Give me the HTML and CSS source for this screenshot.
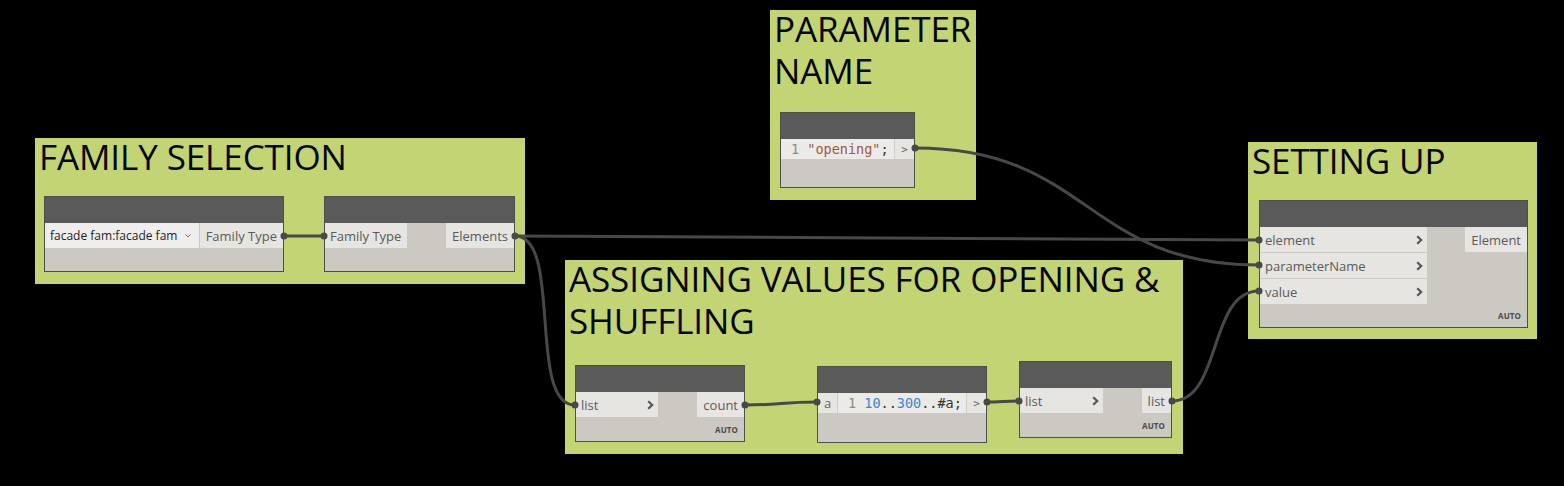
FILE: index.html
```html
<!DOCTYPE html>
<html>
<head>
<meta charset="utf-8">
<link rel="stylesheet" href="styles.css">
</head>
<body>
<div class="canvas">

  <div class="group g-family">
    <h2 class="group-title">FAMILY SELECTION</h2>
    <div class="node n-select">
      <div class="node-head"></div>
      <div class="node-ports">
        <div class="dropdown"><span>facade fam:facade fam</span><svg class="dd-chev" width="6" height="4" viewBox="0 0 6 4"><polyline points="0.5,0.5 3,3 5.5,0.5" fill="none" stroke="#777" stroke-width="1"/></svg></div>
        <div class="port out">Family Type</div>
      </div>
      <div class="node-foot"></div>
    </div>
    <div class="node n-elements">
      <div class="node-head"></div>
      <div class="node-ports">
        <div class="inputs"><div class="port in w82">Family Type</div></div>
        <div class="outputs"><div class="port out">Elements</div></div>
      </div>
      <div class="node-foot"></div>
    </div>
  </div>

  <div class="group g-param">
    <h2 class="group-title">PARAMETER NAME</h2>
    <div class="node n-code1">
      <div class="node-head"></div>
      <div class="code-row">
        <div class="code"><span class="lineno">1</span> <span class="str">"opening"</span>;</div>
        <div class="code-out">&gt;</div>
      </div>
      <div class="node-foot"></div>
    </div>
  </div>

  <div class="group g-setting">
    <h2 class="group-title">SETTING UP</h2>
    <div class="node n-setparam">
      <div class="node-head"></div>
      <div class="node-ports">
        <div class="inputs w167">
          <div class="port in chev">element<svg class="chev-ic" width="7" height="10" viewBox="0 0 7 10"><polyline points="1.2,1.2 5.2,5 1.2,8.8" fill="none" stroke="#555" stroke-width="2.2"/></svg></div>
          <div class="port in chev">parameterName<svg class="chev-ic" width="7" height="10" viewBox="0 0 7 10"><polyline points="1.2,1.2 5.2,5 1.2,8.8" fill="none" stroke="#555" stroke-width="2.2"/></svg></div>
          <div class="port in chev">value<svg class="chev-ic" width="7" height="10" viewBox="0 0 7 10"><polyline points="1.2,1.2 5.2,5 1.2,8.8" fill="none" stroke="#555" stroke-width="2.2"/></svg></div>
        </div>
        <div class="outputs"><div class="port out">Element</div></div>
      </div>
      <div class="node-foot"><span class="auto">AUTO</span></div>
    </div>
  </div>

  <div class="group g-assign">
    <h2 class="group-title">ASSIGNING VALUES FOR OPENING &amp; SHUFFLING</h2>
    <div class="node n-count">
      <div class="node-head"></div>
      <div class="node-ports">
        <div class="inputs"><div class="port in chev w82">list<svg class="chev-ic" width="7" height="10" viewBox="0 0 7 10"><polyline points="1.2,1.2 5.2,5 1.2,8.8" fill="none" stroke="#555" stroke-width="2.2"/></svg></div></div>
        <div class="outputs"><div class="port out">count</div></div>
      </div>
      <div class="node-foot"><span class="auto">AUTO</span></div>
    </div>
    <div class="node n-code2">
      <div class="node-head"></div>
      <div class="code-row">
        <div class="code-in">a</div>
        <div class="code"><span class="lineno">1</span> <span class="num">10</span>..<span class="num">300</span>..#a;</div>
        <div class="code-out">&gt;</div>
      </div>
      <div class="node-foot"></div>
    </div>
    <div class="node n-shuffle">
      <div class="node-head"></div>
      <div class="node-ports">
        <div class="inputs"><div class="port in chev w83">list<svg class="chev-ic" width="7" height="10" viewBox="0 0 7 10"><polyline points="1.2,1.2 5.2,5 1.2,8.8" fill="none" stroke="#555" stroke-width="2.2"/></svg></div></div>
        <div class="outputs"><div class="port out">list</div></div>
      </div>
      <div class="node-foot"><span class="auto">AUTO</span></div>
    </div>
  </div>

  <svg class="wires" width="1564" height="486" viewBox="0 0 1564 486">
    <g fill="none" stroke="#484848" stroke-width="3" stroke-linecap="round">
      <path d="M284,236 L324,236"/>
      <path d="M515,236 C720,236 1060,240 1259,240"/>
      <path d="M515,236 C563,236 527,405 575,405"/>
      <path d="M915,148 C1090,148 1085,265 1259,265"/>
      <path d="M745,405 C780,405 782,402 817,402"/>
      <path d="M987,402 C1000,402 1006,401 1019,401"/>
      <path d="M1172,401 C1222,401 1208,291 1259,291"/>
    </g>
    <g fill="#484848">
      <circle cx="284" cy="236" r="3.5"/><circle cx="324" cy="236" r="3.5"/>
      <circle cx="515" cy="236" r="3.5"/>
      <circle cx="1259" cy="240" r="3.5"/><circle cx="1259" cy="265" r="3.5"/><circle cx="1259" cy="291" r="3.5"/>
      <circle cx="915" cy="148" r="3.5"/>
      <circle cx="575" cy="405" r="3.5"/><circle cx="745" cy="405" r="3.5"/>
      <circle cx="817" cy="402" r="3.5"/><circle cx="987" cy="402" r="3.5"/>
      <circle cx="1019" cy="401" r="3.5"/><circle cx="1172" cy="401" r="3.5"/>
    </g>
  </svg>
</div>
</body>
</html>
```
FILE: styles.css
```css
html, body {
  margin: 0;
  padding: 0;
  background: #000;
}

.canvas {
  position: relative;
  width: 1564px;
  height: 486px;
  background: #000;
  overflow: hidden;
  font-family: "Open Sans", "Noto Sans", sans-serif;
}

.group {
  position: absolute;
  box-sizing: border-box;
  background: #c2d473;
  padding: 0 4px;
}

.group-title {
  margin: -2px 0 0 0;
  font-family: "Open Sans", "Noto Sans", sans-serif;
  font-weight: 400;
  font-size: 35px;
  line-height: 42px;
  letter-spacing: -0.1px;
  color: #050505;
}

.g-family  { left: 35px;   top: 138px; width: 490px; height: 146px; }
.g-param   { left: 770px;  top: 10px;  width: 206px; height: 190px; }
.g-setting { left: 1248px; top: 142px; width: 289px; height: 197px; }
.g-assign  { left: 565px;  top: 260px; width: 618px; height: 194px; }

.node {
  position: absolute;
  box-sizing: border-box;
  display: flex;
  flex-direction: column;
  background: #ccc8c2;
  border: 1px solid #4e4e4e;
}

.node-head {
  height: 26px;
  flex: 0 0 26px;
  background: #5a5a5a;
}

.node-ports {
  display: flex;
  justify-content: space-between;
  align-items: flex-start;
}

.node-foot {
  flex: 1;
  position: relative;
}

.inputs, .outputs {
  display: flex;
  flex-direction: column;
  gap: 1px;
}

.port {
  box-sizing: border-box;
  height: 25px;
  display: flex;
  align-items: center;
  background: #e6e5e1;
  color: #5a5a5a;
  font-size: 13px;
  white-space: nowrap;
}

.port.in { padding-left: 5px; justify-content: space-between; }
.port.out { padding: 0 6px; justify-content: flex-end; }
.port.chev { padding-right: 4px; }

.inputs.w167 .port { width: 167px; }
.w82 { width: 82px; }
.w83 { width: 83px; }

.dropdown {
  box-sizing: border-box;
  width: 154px;
  height: 25px;
  margin-right: 1px;
  display: flex;
  align-items: center;
  justify-content: space-between;
  padding: 0 8px 0 5px;
  background: #efeeec;
  color: #1e1e1e;
  font-size: 12px;
  white-space: nowrap;
}
.n-select .node-ports { justify-content: flex-start; }
.n-select .port.out { flex: 1; }

.auto {
  position: absolute;
  right: 6px;
  bottom: 6px;
  font-size: 8px;
  font-weight: 700;
  color: #4a4a4a;
  letter-spacing: 0.1px;
}

.code-row {
  display: flex;
  height: 20px;
  font-family: "DejaVu Sans Mono", "Liberation Mono", monospace;
  font-size: 13.5px;
}
.code {
  flex: 1;
  display: block;
  line-height: 20px;
  padding-left: 10px;
  background: #ebeae7;
  color: #333;
  white-space: pre;
  overflow: hidden;
}
.lineno { color: #8a8a8a; }
.str { color: #9a5a3a; }
.num { color: #3a86d0; }
.code-out {
  width: 19px;
  flex: 0 0 19px;
  display: flex;
  align-items: center;
  justify-content: center;
  border-left: 1px solid #d0ceca;
  background: #e6e5e1;
  color: #666;
  font-size: 11px;
}
.code-in {
  width: 19px;
  flex: 0 0 19px;
  display: flex;
  align-items: center;
  justify-content: center;
  border-right: 1px solid #cfcdc9;
  background: #e6e5e1;
  color: #666;
  font-family: "Open Sans", sans-serif;
  font-size: 13px;
}

.n-select   { left: 9px;   top: 58px;  width: 240px; height: 76px; }
.n-elements { left: 289px; top: 58px;  width: 191px; height: 76px; }
.n-code1    { left: 10px;  top: 102px; width: 135px; height: 76px; }
.n-setparam { left: 11px;  top: 58px;  width: 269px; height: 128px; }
.n-count    { left: 10px;  top: 105px; width: 170px; height: 77px; }
.n-code2    { left: 252px; top: 106px; width: 170px; height: 77px; }
.n-shuffle  { left: 454px; top: 101px; width: 153px; height: 77px; }

.wires {
  position: absolute;
  left: 0;
  top: 0;
  pointer-events: none;
}
```
